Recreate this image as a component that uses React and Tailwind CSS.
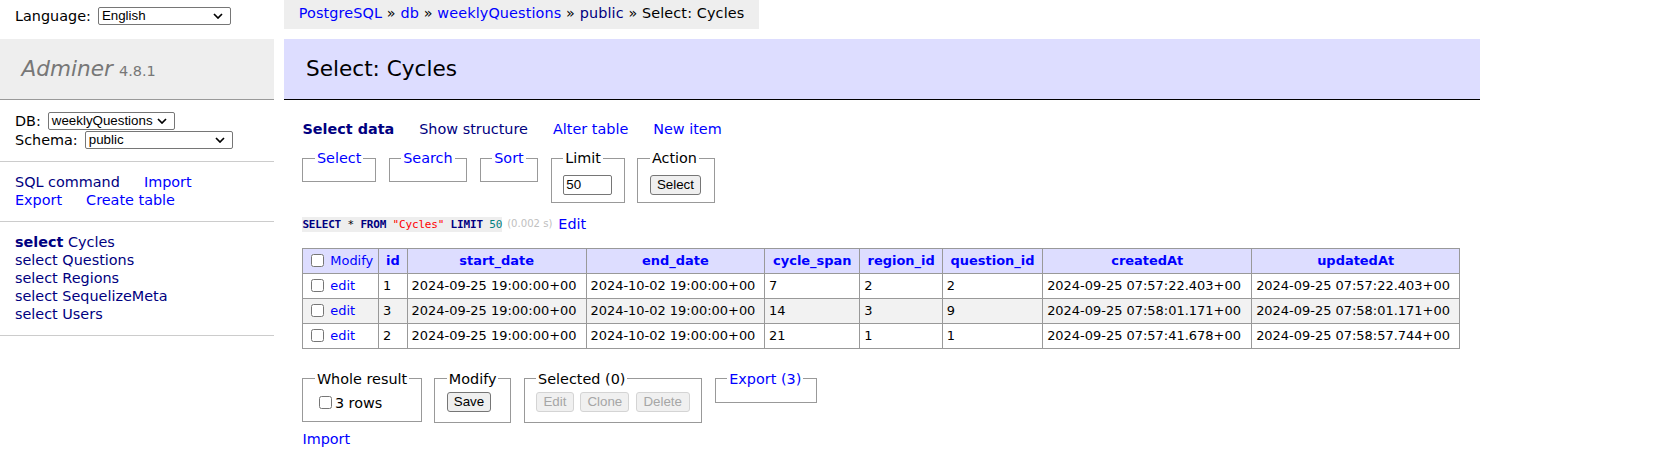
import React from 'react';

const Chevron = () => (
  <svg width="10" height="6" viewBox="0 0 10 6" className="shrink-0">
    <path d="M1 1l4 4 4-4" fill="none" stroke="#000" strokeWidth="1.7" />
  </svg>
);

const rows = [
  ['1', '2024-09-25 19:00:00+00', '2024-10-02 19:00:00+00', '7', '2', '2', '2024-09-25 07:57:22.403+00', '2024-09-25 07:57:22.403+00'],
  ['3', '2024-09-25 19:00:00+00', '2024-10-02 19:00:00+00', '14', '3', '9', '2024-09-25 07:58:01.171+00', '2024-09-25 07:58:01.171+00'],
  ['2', '2024-09-25 19:00:00+00', '2024-10-02 19:00:00+00', '21', '1', '1', '2024-09-25 07:57:41.678+00', '2024-09-25 07:58:57.744+00'],
];

const cols = ['id', 'start_date', 'end_date', 'cycle_span', 'region_id', 'question_id', 'createdAt', 'updatedAt'];

const ctl = "font-['Liberation_Sans',Arial,sans-serif] text-[13.33px]";

export default function App() {
  return (
    <div className="flex min-h-screen w-full bg-white font-['DejaVu_Sans',Verdana,sans-serif] text-[14.4px] leading-[18px] text-black">
      {/* MENU */}
      <div className="w-[273.6px] shrink-0">
        <div className="flex h-[32.6px] items-center gap-[7px] pl-[15px]">
          <span>Language:</span>
          <span className={`inline-flex h-[18px] w-[133px] items-center justify-between rounded-[2px] border border-[#767676] bg-white pl-[3px] pr-[7px] ${ctl}`}>
            <span>English</span>
            <Chevron />
          </span>
        </div>
        <div className="h-[6.2px]" />

        <h1 className="flex h-[61px] items-baseline gap-[6px] border-b border-[#999] bg-[#eee] px-[21.6px] pt-[17px] text-[21.6px] leading-[26px] text-[#777]">
          <span className="italic">Adminer</span>
          <span className="text-[14.47px] leading-none">4.8.1</span>
        </h1>

        <div className="border-b border-[#ccc] px-[15px] py-[11.5px]">
          <div className="flex h-[19px] items-center gap-[7px]">
            <span>DB:</span>
            <span className={`inline-flex h-[17.5px] w-[127px] items-center justify-between rounded-[2px] border border-[#767676] bg-white pl-[3px] pr-[7px] ${ctl}`}>
              <span>weeklyQuestions</span>
              <Chevron />
            </span>
          </div>
          <div className="flex h-[19px] items-center gap-[7px]">
            <span>Schema:</span>
            <span className={`inline-flex h-[17.5px] w-[148px] items-center justify-between rounded-[2px] border border-[#767676] bg-white pl-[3px] pr-[7px] ${ctl}`}>
              <span>public</span>
              <Chevron />
            </span>
          </div>
        </div>

        <div className="border-b border-[#ccc] px-[15px] py-[11.5px]">
          <div className="flex gap-[24px]">
            <span className="text-[#000080]">SQL command</span>
            <span className="text-[#00f]">Import</span>
          </div>
          <div className="flex gap-[24px]">
            <span className="text-[#00f]">Export</span>
            <span className="text-[#00f]">Create table</span>
          </div>
        </div>

        <ul className="border-b border-[#ccc] px-[15px] py-[11.5px] text-[#000080]">
          <li><b>select</b> Cycles</li>
          <li>select Questions</li>
          <li>select Regions</li>
          <li>select SequelizeMeta</li>
          <li>select Users</li>
        </ul>
      </div>

      {/* CONTENT */}
      <div className="ml-[10.8px] w-[1195.6px] shrink-0 pb-[20px]">
        <div className="inline-block h-[28.8px] bg-[#eee] px-[14.4px] leading-[26px] tracking-[0.12px]">
          <span className="text-[#00f]">PostgreSQL</span> » <span className="text-[#00f]">db</span> » <span className="text-[#00f]">weeklyQuestions</span> » <span className="text-[#000080]">public</span> » Select: Cycles
        </div>

        <h2 className="mt-[10px] h-[61px] border-b border-black bg-[#ddf] px-[21.6px] pt-[17px] text-[21.6px] leading-[26px]">
          Select: Cycles
        </h2>

        <div className="pl-[18px]">
          <div className="mt-[20px] flex gap-[25px]">
            <span className="font-bold text-[#000080]">Select data</span>
            <span className="text-[#000080]">Show structure</span>
            <span className="text-[#00f]">Alter table</span>
            <span className="text-[#00f]">New item</span>
          </div>

          {/* SELECT FORM */}
          <div className="mt-[11.6px] flex items-start gap-[12.6px]">
            <fieldset className="h-[32.3px] w-[73.7px] border border-[#999] px-[11.5px]">
              <legend className="px-[2px] text-[#00f]">Select</legend>
            </fieldset>
            <fieldset className="h-[32.3px] w-[78.4px] border border-[#999] px-[11.5px]">
              <legend className="px-[2px] text-[#00f]">Search</legend>
            </fieldset>
            <fieldset className="h-[32.3px] w-[58.4px] border border-[#999] px-[11.5px]">
              <legend className="px-[2px] text-[#00f]">Sort</legend>
            </fieldset>
            <fieldset className="h-[53.3px] w-[72.6px] border border-[#999] px-[11.5px] pt-[7.2px]">
              <legend className="px-[2px]">Limit</legend>
              <input
                defaultValue="50"
                className={`block h-[20.4px] w-[49px] rounded-[2px] border border-[#767676] px-[2px] ${ctl}`}
              />
            </fieldset>
            <fieldset className="h-[53.3px] w-[77.4px] border border-[#999] px-[11.5px] pt-[7.2px]">
              <legend className="px-[2px]">Action</legend>
              <button className={`block h-[20.4px] rounded-[3px] border border-[#767676] bg-[#efefef] px-[6px] ${ctl}`}>Select</button>
            </fieldset>
          </div>

          {/* QUERY */}
          <div className="mt-[12.7px] flex items-center">
            <code className="bg-[#eee] font-['DejaVu_Sans_Mono',monospace] text-[11px] leading-[15px] tracking-[-0.18px]">
              <b className="text-[#000080]">SELECT</b> * <b className="text-[#000080]">FROM</b> <span className="text-[#f00]">"Cycles"</span> <b className="text-[#000080]">LIMIT</b> <span className="text-[#007f7f]">50</span>
            </code>
            <span className="ml-[5px] text-[10.08px] text-[#c0c0c0]">(0.002 s)</span>
            <span className="ml-[6px] text-[#00f]">Edit</span>
          </div>

          {/* DATA TABLE */}
          <table className="mt-[14.6px] w-[1156.7px] table-fixed border-collapse whitespace-pre text-[12.96px] leading-[16px]">
            <colgroup>
              <col className="w-[75.7px]" />
              <col className="w-[28.6px]" />
              <col className="w-[178.9px]" />
              <col className="w-[178.6px]" />
              <col className="w-[95.3px]" />
              <col className="w-[82.4px]" />
              <col className="w-[100.4px]" />
              <col className="w-[209px]" />
              <col className="w-[207.8px]" />
            </colgroup>
            <thead>
              <tr className="h-[25px] bg-[#ddf]">
                <td className="border border-[#999] px-[3.9px]">
                  <span className="flex items-center">
                    <input type="checkbox" className="ml-[4px] mr-[6px] h-[13px] w-[13px]" />
                    <span className="text-[#00f]">Modify</span>
                  </span>
                </td>
                {cols.map(c => (
                  <th key={c} className="border border-[#999] px-[6.5px] text-center font-bold text-[#00f]">{c}</th>
                ))}
              </tr>
            </thead>
            <tbody>
              {rows.map((r, i) => (
                <tr key={i} className={i % 2 ? 'h-[25px] bg-[#f2f2f2]' : 'h-[25px] bg-white'}>
                  <td className="border border-[#999] px-[3.9px]">
                    <span className="flex items-center">
                      <input type="checkbox" className="ml-[4px] mr-[6px] h-[13px] w-[13px]" />
                      <span className="text-[#00f]">edit</span>
                    </span>
                  </td>
                  {r.map((v, j) => (
                    <td key={j} className="border border-[#999] px-[3.9px]">{v}</td>
                  ))}
                </tr>
              ))}
            </tbody>
          </table>

          {/* FOOTER */}
          <div className="mt-[21px] flex items-start gap-[12.6px]">
            <fieldset className="h-[51.6px] w-[119.3px] border border-[#999] px-[11.5px] pt-[5.6px]">
              <legend className="px-[2px]">Whole result</legend>
              <label className="flex h-[18px] items-center">
                <input type="checkbox" className="ml-[4px] mr-[3px] h-[13px] w-[13px]" />
                <span>3 rows</span>
              </label>
            </fieldset>
            <fieldset className="h-[53.3px] w-[76.4px] border border-[#999] px-[11.5px] pt-[4.2px]">
              <legend className="px-[2px]">Modify</legend>
              <button className={`block h-[20px] rounded-[3px] border border-[#767676] bg-[#efefef] px-[6px] ${ctl}`}>Save</button>
            </fieldset>
            <fieldset className="h-[53.3px] w-[178.6px] border border-[#999] px-[11.5px] pt-[4.2px]">
              <legend className="px-[2px]">Selected (0)</legend>
              <div className="flex gap-[6.5px]">
                <button disabled className={`h-[20px] w-[37.8px] rounded-[3px] border border-[#d4d4d4] bg-[#f0f0f0] text-[#a6a6a6] ${ctl}`}>Edit</button>
                <button disabled className={`h-[20px] w-[48.9px] rounded-[3px] border border-[#d4d4d4] bg-[#f0f0f0] text-[#a6a6a6] ${ctl}`}>Clone</button>
                <button disabled className={`h-[20px] w-[53.9px] rounded-[3px] border border-[#d4d4d4] bg-[#f0f0f0] text-[#a6a6a6] ${ctl}`}>Delete</button>
              </div>
            </fieldset>
            <fieldset className="h-[32.6px] w-[102.1px] border border-[#999] px-[11.5px]">
              <legend className="px-[2px] text-[#00f]">Export (3)</legend>
            </fieldset>
          </div>

          <p className="mt-[6.3px] text-[#00f]">Import</p>
        </div>
      </div>
    </div>
  );
}
